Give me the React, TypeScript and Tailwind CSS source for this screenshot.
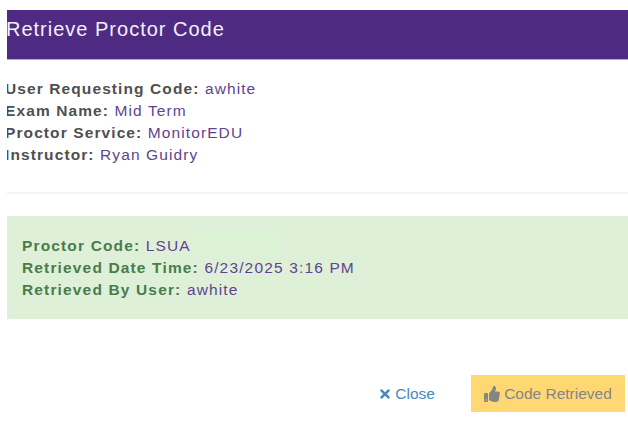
import { FaTimes, FaThumbsUp } from "react-icons/fa";

function Row({ label, value, labelClass }: { label: string; value: string; labelClass: string }) {
  return (
    <div className="h-[22px] leading-[22px] whitespace-nowrap">
      <span className={`font-bold ${labelClass}`}>{label}:</span>{" "}
      <span className="text-[#5f4391]">{value}</span>
    </div>
  );
}

export default function App() {
  return (
    <div className="w-[628px] h-[421px] bg-white overflow-hidden pl-[7px] pt-[10px] font-['Liberation_Sans',Arial,sans-serif]">
      <div className="h-[50px] bg-[#4f2a82] border-b border-[#b9a8d0] text-[#f4f0fa] text-[20px] leading-[38px] tracking-[1px] overflow-hidden">
        <div className="-ml-[1px]">Retrieve Proctor Code</div>
      </div>
      <div className="h-[134px] pt-[18px] overflow-hidden border-b-2 border-[#f3f3f3] text-[15.5px] tracking-[1.1px]">
        <div className="-ml-[2px]">
          <Row label="User Requesting Code" value="awhite" labelClass="text-[#4f4f4f]" />
          <Row label="Exam Name" value="Mid Term" labelClass="text-[#4f4f4f]" />
          <Row label="Proctor Service" value="MonitorEDU" labelClass="text-[#4f4f4f]" />
          <Row label="Instructor" value="Ryan Guidry" labelClass="text-[#4f4f4f]" />
        </div>
      </div>
      <div className="mt-[22px] h-[103px] bg-[#dff0d8] pl-[15px] pt-[19px] text-[15.5px] tracking-[1.15px]">
        <div className="relative">
          <Row label="Proctor Code" value="LSUA:" labelClass="text-[#4a7c4b]" />
          <div className="absolute left-[170px] -top-[3px] w-[88px] h-[23px] bg-[#dcf3d4]" />
          <Row label="Retrieved Date Time" value="6/23/2025 3:16 PM" labelClass="text-[#4a7c4b]" />
          <Row label="Retrieved By User" value="awhite" labelClass="text-[#4a7c4b]" />
        </div>
      </div>
      <div className="mt-[56px] flex items-center justify-end pr-[3px] text-[15.5px]">
        <div className="flex items-center gap-[3px] text-[#4a88c0] mr-[36px]">
          <FaTimes size={14} />
          <span>Close</span>
        </div>
        <div className="w-[154px] h-[37px] bg-[#ffd873] text-[#858585] flex items-center justify-center gap-[4px]">
          <FaThumbsUp size={16} />
          <span>Code Retrieved</span>
        </div>
      </div>
    </div>
  );
}
